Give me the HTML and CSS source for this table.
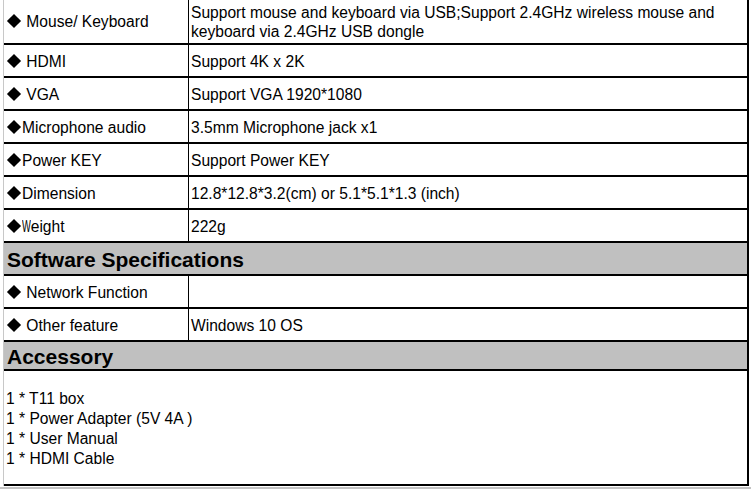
FILE: index.html
```html
<!DOCTYPE html>
<html>
<head>
<meta charset="utf-8">
<link rel="stylesheet" href="styles.css">
</head>
<body>
<div class="sheet">
  <div class="row first">
    <div class="key"><span><span class="dia"></span> Mouse/ Keyboard</span></div>
    <div class="val"><span>Support mouse and keyboard via USB;Support 2.4GHz wireless mouse and keyboard via 2.4GHz USB dongle</span></div>
  </div>
  <div class="row">
    <div class="key"><span><span class="dia"></span> HDMI</span></div>
    <div class="val"><span>Support 4K x 2K</span></div>
  </div>
  <div class="row">
    <div class="key"><span><span class="dia"></span> VGA</span></div>
    <div class="val"><span>Support VGA 1920*1080</span></div>
  </div>
  <div class="row">
    <div class="key"><span><span class="dia"></span>Microphone audio</span></div>
    <div class="val"><span>3.5mm Microphone jack x1</span></div>
  </div>
  <div class="row">
    <div class="key"><span><span class="dia"></span>Power KEY</span></div>
    <div class="val"><span>Support Power KEY</span></div>
  </div>
  <div class="row">
    <div class="key"><span><span class="dia"></span>Dimension</span></div>
    <div class="val"><span>12.8*12.8*3.2(cm) or 5.1*5.1*1.3 (inch)</span></div>
  </div>
  <div class="row">
    <div class="key"><span><span class="dia"></span><span class="w">W</span>eight</span></div>
    <div class="val"><span>222g</span></div>
  </div>
  <div class="row head">Software Specifications</div>
  <div class="row">
    <div class="key"><span><span class="dia"></span> Network Function</span></div>
    <div class="val"><span></span></div>
  </div>
  <div class="row">
    <div class="key"><span><span class="dia"></span> Other feature</span></div>
    <div class="val"><span>Windows 10 OS</span></div>
  </div>
  <div class="row head acc-head">Accessory</div>
  <div class="row acc">
    <div class="acc-list">1 * T11 box<br>1 * Power Adapter (5V 4A )<br>1 * User Manual<br>1 * HDMI Cable</div>
  </div>
</div>
<div class="strip"></div>
</body>
</html>
```
FILE: styles.css
```css
html, body {
  margin: 0;
  padding: 0;
  background: #fff;
}
body {
  width: 751px;
  height: 489px;
  overflow: hidden;
  font-family: "Liberation Sans", Arial, sans-serif;
  font-size: 15.6px;
  color: #000;
}
.sheet {
  margin-left: 3px;
  width: 746px;
  box-sizing: border-box;
  border-left: 1px solid #c8c8c8;
  border-right: 2px solid #000;
  display: flex;
  flex-direction: column;
}
.row {
  display: flex;
  height: 33px;
  box-sizing: border-box;
  padding-top: 2px;
  border-bottom: 2px solid #000;
  flex-shrink: 0;
}
.row.first {
  height: 45px;
  padding-top: 1px;
}
.key {
  width: 185px;
  box-sizing: border-box;
  border-right: 1px solid #000;
  margin-top: -2px;
  padding-top: 2px;
  padding-left: 5px;
  display: flex;
  align-items: center;
  white-space: nowrap;
}
.first .key {
  margin-top: -1px;
  padding-top: 1px;
}
.val {
  flex: 1;
  margin-top: -2px;
  padding-top: 2px;
  padding-left: 2px;
  padding-right: 4px;
  display: flex;
  align-items: center;
  line-height: 19px;
}
.first .val {
  margin-top: -1px;
  padding-top: 1px;
}
.dia {
  display: inline-block;
  width: 10px;
  height: 10px;
  background: #000;
  transform: rotate(45deg);
  margin-right: 3px;
  margin-bottom: 1px;
}
.w {
  display: inline-block;
  transform: scaleX(0.6);
  transform-origin: left center;
  margin-right: -6px;
}
.head {
  background: #c0c0c0;
  font-weight: bold;
  font-size: 21px;
  align-items: center;
  padding-left: 3px;
  padding-top: 3px;
}
.acc-head {
  height: 29px;
}
.acc {
  height: 115px;
  align-items: center;
  padding-left: 2px;
  line-height: 20px;
}
.strip {
  margin-top: 1px;
  height: 3px;
  background: #c3c3c3;
}
```
